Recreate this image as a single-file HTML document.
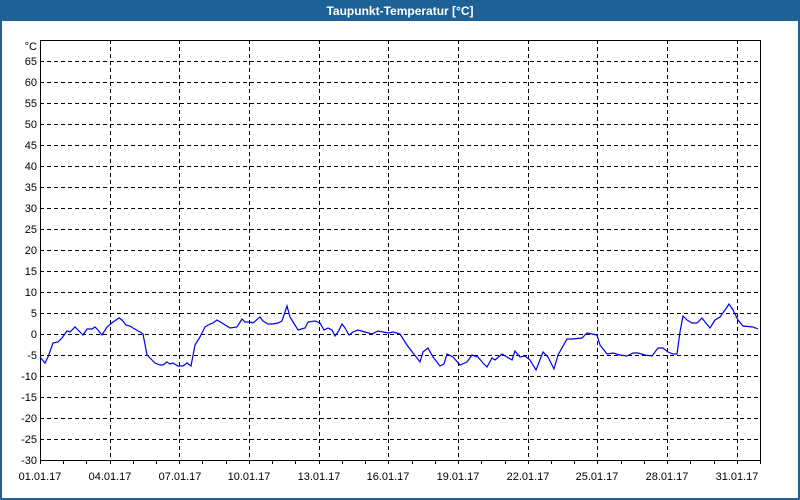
<!DOCTYPE html>
<html><head><meta charset="utf-8"><style>
html,body{margin:0;padding:0;width:800px;height:500px;overflow:hidden;background:#fff}
svg{display:block}
text{font-family:"Liberation Sans",sans-serif;font-size:11px;fill:#000}
</style></head><body>
<svg width="800" height="500" viewBox="0 0 800 500">
<rect x="0" y="0" width="800" height="500" fill="#1d6196"/>
<rect x="2" y="21" width="796" height="477" fill="#fff"/>
<text x="400" y="15" text-anchor="middle" style="font-weight:bold;font-size:12px;fill:#fff">Taupunkt-Temperatur [°C]</text>
<g stroke="#000" stroke-width="1" stroke-dasharray="4,3" shape-rendering="crispEdges">
<path d="M40 61.5H760M40 82.5H760M40 103.5H760M40 124.5H760M40 145.5H760M40 166.5H760M40 187.5H760M40 208.5H760M40 229.5H760M40 250.5H760M40 271.5H760M40 292.5H760M40 313.5H760M40 334.5H760M40 355.5H760M40 376.5H760M40 397.5H760M40 418.5H760M40 439.5H760"/>
<path d="M110.5 40V460M179.5 40V460M249.5 40V460M319.5 40V460M388.5 40V460M458.5 40V460M528.5 40V460M597.5 40V460M667.5 40V460M737.5 40V460"/>
</g>
<rect x="40.5" y="40.5" width="720" height="420" fill="none" stroke="#000" shape-rendering="crispEdges"/>
<g stroke="#000" shape-rendering="crispEdges" id="ticks"></g>
<g text-anchor="end">
<text x="37" y="50">°C</text>
<text x="37" y="65">65</text><text x="37" y="86">60</text><text x="37" y="107">55</text><text x="37" y="128">50</text><text x="37" y="149">45</text><text x="37" y="170">40</text><text x="37" y="191">35</text><text x="37" y="212">30</text><text x="37" y="233">25</text><text x="37" y="254">20</text><text x="37" y="275">15</text><text x="37" y="296">10</text><text x="37" y="317">5</text><text x="37" y="338">0</text><text x="37" y="359">-5</text><text x="37" y="380">-10</text><text x="37" y="401">-15</text><text x="37" y="422">-20</text><text x="37" y="443">-25</text><text x="37" y="464">-30</text>
</g>
<g text-anchor="middle">
<text x="40" y="480">01.01.17</text><text x="110" y="480">04.01.17</text><text x="180" y="480">07.01.17</text><text x="249" y="480">10.01.17</text><text x="319" y="480">13.01.17</text><text x="388" y="480">16.01.17</text><text x="458" y="480">19.01.17</text><text x="528" y="480">22.01.17</text><text x="597" y="480">25.01.17</text><text x="667" y="480">28.01.17</text><text x="737" y="480">31.01.17</text>
</g>
<path d="M40.5 461v3M63.5 461v3M86.5 461v3M110.5 461v3M133.5 461v3M156.5 461v3M179.5 461v3M202.5 461v3M226.5 461v3M249.5 461v3M272.5 461v3M295.5 461v3M319.5 461v3M342.5 461v3M365.5 461v3M388.5 461v3M412.5 461v3M435.5 461v3M458.5 461v3M481.5 461v3M505.5 461v3M528.5 461v3M551.5 461v3M574.5 461v3M597.5 461v3M621.5 461v3M644.5 461v3M667.5 461v3M690.5 461v3M714.5 461v3M737.5 461v3M760.5 461v3" stroke="#000" shape-rendering="crispEdges"/>
<polyline fill="none" stroke="#0000ee" stroke-width="1.2" points="40,357 45,363 48,357 53,343 58,342 62,338 67,331 70,332 75,327 80,332 83,335 87,329 92,329 95,327 98,330 102,335 107,327 113,322 119,318 122,320 126,325 130,326 133,328 140,332 143,334 147,355 152,360 155,363 160,365 163,365 167,362 170,364 173,363 178,366 183,366 187,363 191,366 195,345 200,337 205,327 210,324 213,323 217,320 222,323 230,328 237,327 242,319 245,322 250,322 253,323 260,317 263,321 268,324 273,324 278,323 282,321 287,306 290,317 298,330 305,328 308,322 315,321 320,323 324,330 328,328 332,330 335,336 338,332 342,324 345,328 349,335 353,332 358,330 365,332 372,334 378,331 383,332 388,333 393,332 400,334 407,345 413,353 417,358 420,362 423,352 428,348 433,357 440,366 444,364 447,354 453,357 460,365 467,362 472,355 478,357 483,363 487,367 492,358 495,360 502,354 507,357 512,360 515,351 520,357 525,356 530,360 536,370 543,352 548,357 554,369 558,355 567,339 573,339 582,338 587,333 592,334 597,335 600,345 607,354 613,353 620,355 627,356 633,353 638,353 645,355 652,356 658,348 663,348 668,352 673,354 677,354 680,332 683,316 687,320 692,323 697,323 702,318 705,322 710,328 715,320 720,317 725,310 729,304 733,310 738,320 743,326 753,327 758,329"/>
</svg>
</body></html>
